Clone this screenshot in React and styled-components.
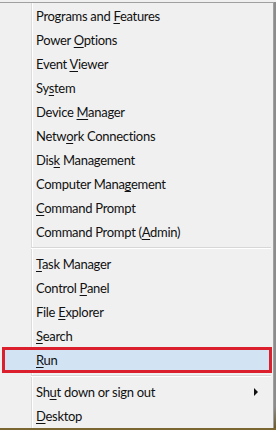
import styled, { createGlobalStyle } from "styled-components";

const GlobalStyle = createGlobalStyle`
  html, body {
    margin: 0;
    padding: 0;
    background: #f0f0f0;
  }
  body {
    font-family: Lato, "Open Sans", sans-serif;
  }
`;

const groups = [
  [
    { label: "Programs and Features", key: 13 },
    { label: "Power Options", key: 6 },
    { label: "Event Viewer", key: 6 },
    { label: "System", key: 2 },
    { label: "Device Manager", key: 7 },
    { label: "Network Connections", key: 4 },
    { label: "Disk Management", key: 3 },
    { label: "Computer Management", key: 13 },
    { label: "Command Prompt", key: 0 },
    { label: "Command Prompt (Admin)", key: 16 },
  ],
  [
    { label: "Task Manager", key: 0 },
    { label: "Control Panel", key: 8 },
    { label: "File Explorer", key: 5 },
    { label: "Search", key: 0 },
    { label: "Run", key: 0, active: true },
  ],
  [
    { label: "Shut down or sign out", key: 2, submenu: true },
    { label: "Desktop", key: 0 },
  ],
];

function Label({ text, index }) {
  return (
    <span>
      {text.slice(0, index)}
      <u>{text[index]}</u>
      {text.slice(index + 1)}
    </span>
  );
}

export default function App() {
  return (
    <>
      <GlobalStyle />
      <Screen>
        <Frame>
          <Menu>
            {groups.map((items, gi) => (
              <Group key={gi}>
                {gi > 0 && <Separator />}
                {items.map((item) => (
                  <Item key={item.label} $active={item.active}>
                    <Label text={item.label} index={item.key} />
                    {item.submenu && <Arrow />}
                  </Item>
                ))}
              </Group>
            ))}
          </Menu>
          <Shadow />
        </Frame>
        <Ground />
      </Screen>
    </>
  );
}

const Screen = styled.div`
  width: 276px;
  height: 430px;
  overflow: hidden;
  display: flex;
  flex-direction: column;
  padding-top: 2px;
  box-sizing: border-box;
`;

const Frame = styled.div`
  display: flex;
  flex: 1;
`;

const Menu = styled.div`
  width: 274px;
  box-sizing: border-box;
  border-top: 1px solid #a0a0a0;
  border-right: 1px solid #a0a0a0;
  padding-top: 1px;
  background: linear-gradient(
    to right,
    #f0f0f0 31px,
    #dcdcdc 31px,
    #dcdcdc 32px,
    #ffffff 32px,
    #ffffff 33px,
    #f0f0f0 33px
  );
`;

const Shadow = styled.div`
  width: 2px;
  background: linear-gradient(to bottom, #8c8c8c 0%, #8c8c8c 95%, #6b5a2c 100%);
`;

const Ground = styled.div`
  height: 2px;
  background: #7a6630;
`;

const Group = styled.div`
  display: flex;
  flex-direction: column;
`;

const Separator = styled.div`
  height: 1px;
  margin: 3px 2px 3px 31px;
  background: #d7d7d7;
  border-bottom: 1px solid #ffffff;
`;

const Item = styled.div`
  height: 24px;
  display: flex;
  align-items: center;
  padding-left: 36px;
  padding-right: 12px;
  font-size: 13px;
  letter-spacing: -0.3px;
  color: #111111;
  white-space: nowrap;

  span {
    flex: 1;
  }

  u {
    text-decoration-thickness: 1px;
    text-underline-offset: 2px;
  }

  ${({ $active }) =>
    $active &&
    `
    height: 26px;
    margin: -1px 1px -1px 2px;
    padding-left: 31px;
    box-sizing: border-box;
    border: 3px solid #dc1f2d;
    background: #d2e3f4;
  `}
`;

const Arrow = styled.i`
  width: 0;
  height: 0;
  border-top: 4px solid transparent;
  border-bottom: 4px solid transparent;
  border-left: 4px solid #111111;
  margin-right: 3px;
`;
